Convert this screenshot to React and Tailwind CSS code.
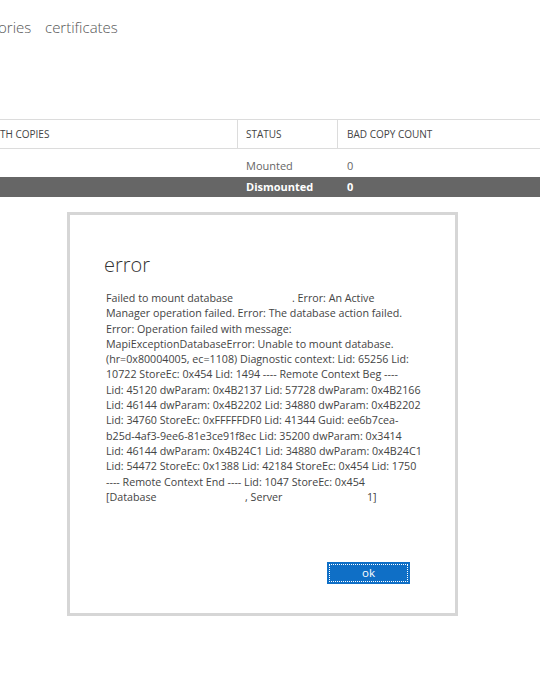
export default function App() {
  const lines = [
    "Manager operation failed. Error: The database action failed.",
    "Error: Operation failed with message:",
    "MapiExceptionDatabaseError: Unable to mount database.",
    "(hr=0x80004005, ec=1108) Diagnostic context: Lid: 65256 Lid:",
    "10722 StoreEc: 0x454 Lid: 1494 ---- Remote Context Beg ----",
    "Lid: 45120 dwParam: 0x4B2137 Lid: 57728 dwParam: 0x4B2166",
    "Lid: 46144 dwParam: 0x4B2202 Lid: 34880 dwParam: 0x4B2202",
    "Lid: 34760 StoreEc: 0xFFFFFDF0 Lid: 41344 Guid: ee6b7cea-",
    "b25d-4af3-9ee6-81e3ce91f8ec Lid: 35200 dwParam: 0x3414",
    "Lid: 46144 dwParam: 0x4B24C1 Lid: 34880 dwParam: 0x4B24C1",
    "Lid: 54472 StoreEc: 0x1388 Lid: 42184 StoreEc: 0x454 Lid: 1750",
    "---- Remote Context End ---- Lid: 1047 StoreEc: 0x454",
  ];
  return (
    <div
      className="w-[540px] h-[675px] bg-white overflow-hidden relative"
      style={{ fontFamily: '"Open Sans", "Noto Sans", sans-serif' }}
    >
      {/* top nav */}
      <div className="flex items-center gap-[14px] h-[20px] mt-[17px] ml-[-2px] text-[15px] text-[#555] font-light">
        <span className="w-[33px] text-right">ories</span>
        <span>certificates</span>
      </div>

      {/* table */}
      <div className="mt-[82px] border-t border-[#dcdcdc]">
        <div className="flex h-[29px] items-center border-b border-[#dcdcdc] text-[10px] text-[#444] uppercase">
          <div className="w-[238px] h-full flex items-center border-r border-[#dcdcdc] pl-0">TH COPIES</div>
          <div className="w-[100px] h-full flex items-center border-r border-[#dcdcdc] pl-[8px]">STATUS</div>
          <div className="flex-1 h-full flex items-center pl-[9px]">BAD COPY COUNT</div>
        </div>
        <div className="flex h-[28px] pt-[6px] items-center text-[11px] text-[#666]">
          <div className="w-[238px]"></div>
          <div className="w-[100px] pl-[8px]">Mounted</div>
          <div className="flex-1 pl-[9px]">0</div>
        </div>
        <div className="flex h-[20px] items-center bg-[#666666] text-[11px] text-white font-bold">
          <div className="w-[238px]"></div>
          <div className="w-[100px] pl-[8px]">Dismounted</div>
          <div className="flex-1 pl-[9px]">0</div>
        </div>
      </div>

      {/* error dialog */}
      <div className="ml-[67px] mt-[15px] w-[391px] h-[404px] border-[3px] border-[#d6d6d6] bg-white flex flex-col">
        <div className="pl-[34px] pt-[38px] text-[20px] leading-[24px] text-[#333] font-light">error</div>
        <div className="pl-[36px] mt-[14px] text-[10.7px] leading-[15.3px] text-[#444] whitespace-nowrap">
          <div>
            <span className="inline-block w-[186px]">Failed to mount database</span>
            <span>. Error: An Active</span>
          </div>
          {lines.map((l, i) => (
            <div key={i}>{l}</div>
          ))}
          <div>
            <span className="inline-block w-[139px]">[Database</span>
            <span className="inline-block w-[122px]">, Server</span>
            <span>1]</span>
          </div>
        </div>
        <div className="flex justify-end mt-auto mb-[29px] pr-[45px]">
          <button className="w-[83px] h-[22px] bg-[#0f6fc6] text-white text-[11.5px] leading-none flex items-center justify-center p-[2px]">
            <span className="w-full h-full border border-dotted border-white flex items-center justify-center">ok</span>
          </button>
        </div>
      </div>
    </div>
  );
}
